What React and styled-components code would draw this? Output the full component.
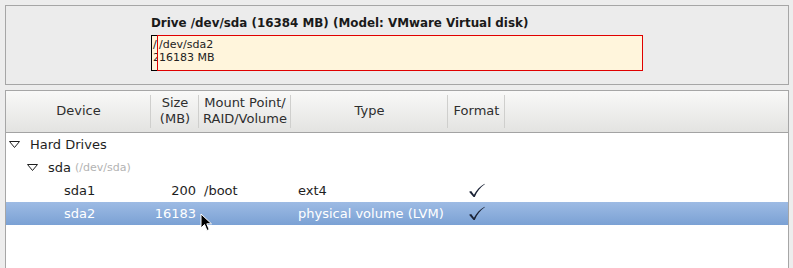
import React from "react";
import styled, { createGlobalStyle } from "styled-components";

const GlobalStyle = createGlobalStyle`
  html, body {
    margin: 0;
    padding: 0;
    background: #ededed;
    font-family: "DejaVu Sans", "Liberation Sans", sans-serif;
  }
`;

const COLUMNS = "145px 48px 92px 157px 57px 1fr";

const Page = styled.div`
  width: 793px;
  height: 268px;
  box-sizing: border-box;
  padding: 5px 5px 0 5px;
  display: flex;
  flex-direction: column;
  gap: 5px;
  overflow: hidden;
  position: relative;
`;

const DrivePanel = styled.div`
  width: 784px;
  height: 80px;
  box-sizing: border-box;
  border: 1px solid #a6a6a6;
  background: #ececec;
  padding: 10px 0 0 145px;
  display: flex;
  flex-direction: column;
  gap: 4px;
`;

const DriveTitle = styled.div`
  font-size: 11.9px;
  font-weight: bold;
  color: #1a1a1a;
  line-height: 15px;
`;

const Bar = styled.div`
  display: flex;
  height: 36px;
`;

const Segment = styled.div`
  box-sizing: border-box;
  width: ${(p) => p.$w}px;
  height: 36px;
  border: 1px solid ${(p) => p.$border};
  margin-left: ${(p) => (p.$overlap ? -1 : 0)}px;
  background: #fff5dc;
  overflow: hidden;
  white-space: nowrap;
  font-size: 11px;
  line-height: 13px;
  color: #222;
  padding: 2px 0 0 1px;
`;

const TreeView = styled.div`
  flex: 1;
  width: 784px;
  box-sizing: border-box;
  border: 1px solid #a6a6a6;
  border-bottom: none;
  background: #ffffff;
`;

const Header = styled.div`
  display: grid;
  grid-template-columns: ${COLUMNS};
  height: 42px;
  box-sizing: border-box;
  border-bottom: 1px solid #a3a3a3;
  background: linear-gradient(#f9f9f8, #e3e3e1);
`;

const HeaderCell = styled.div`
  display: flex;
  align-items: center;
  justify-content: center;
  text-align: center;
  font-size: 13px;
  line-height: 16px;
  color: #2e2e2e;
  padding-bottom: 1px;
  position: relative;
  &::after {
    content: "";
    display: ${(p) => (p.$sep ? "block" : "none")};
    position: absolute;
    right: 0;
    top: 4px;
    bottom: 4px;
    width: 1px;
    background: #cfcfcd;
  }
`;

const Row = styled.div`
  display: grid;
  grid-template-columns: ${COLUMNS};
  height: 23px;
  align-items: center;
  font-size: 13px;
  color: ${(p) => (p.$selected ? "#ffffff" : "#1e1e1e")};
  background: ${(p) =>
    p.$selected ? "linear-gradient(#9dbbe4, #7ba1d4)" : "transparent"};
`;

const DeviceCell = styled.div`
  display: flex;
  align-items: center;
  padding-left: ${(p) => p.$indent}px;
  white-space: nowrap;
`;

const Expander = styled.svg`
  width: 11px;
  height: 7px;
  margin-right: 10px;
  flex-shrink: 0;
`;

const DevPath = styled.span`
  font-size: 11px;
  color: #b3b3b3;
  margin-left: 4px;
`;

const SizeCell = styled.div`
  text-align: right;
  padding-right: 3px;
`;

const TextCell = styled.div`
  padding-left: ${(p) => p.$pad || 5}px;
  white-space: nowrap;
`;

const CheckCell = styled.div`
  display: flex;
  justify-content: center;
  padding-right: 1px;
`;

const Pointer = styled.svg`
  position: absolute;
  left: 200px;
  top: 213px;
  width: 14px;
  height: 20px;
`;

const Triangle = () => (
  <Expander viewBox="0 0 11 7">
    <path d="M0.5 0.5 L10.5 0.5 L5.5 6.5 Z" fill="#fff" stroke="#1e1e1e" strokeWidth="1" />
  </Expander>
);

const Check = () => (
  <svg width="17" height="15" viewBox="0 0 16 14">
    <path
      d="M1 8.2 L3 7.4 L5.6 11 C8 6.5 11 3 15.6 0.6 L15.8 1.2 C11.5 4 8.6 8 6.4 13.2 L5.2 13.2 Z"
      fill="#1b2336"
    />
  </svg>
);

const columns = [
  { label: "Device", sep: true },
  { label: "Size\n(MB)", sep: true },
  { label: "Mount Point/\nRAID/Volume", sep: true },
  { label: "Type", sep: true },
  { label: "Format", sep: true },
  { label: "", sep: false },
];

const partitions = [
  { name: "sda1", size: "200", mount: "/boot", type: "ext4", format: true },
  { name: "sda2", size: "16183", mount: "", type: "physical volume (LVM)", format: true, selected: true },
];

export default function App() {
  return (
    <>
      <GlobalStyle />
      <Page>
        <DrivePanel>
          <DriveTitle>Drive /dev/sda (16384 MB) (Model: VMware Virtual disk)</DriveTitle>
          <Bar>
            <Segment $w={7} $border="#000000">
              /dev/sda1
              <br />
              200 MB
            </Segment>
            <Segment $w={486} $border="#e00000" $overlap>
              /dev/sda2
              <br />
              16183 MB
            </Segment>
          </Bar>
        </DrivePanel>
        <TreeView>
          <Header>
            {columns.map((c, i) => (
              <HeaderCell key={i} $sep={c.sep}>
                <span style={{ whiteSpace: "pre" }}>{c.label}</span>
              </HeaderCell>
            ))}
          </Header>
          <Row>
            <DeviceCell $indent={3}>
              <Triangle />
              Hard Drives
            </DeviceCell>
          </Row>
          <Row>
            <DeviceCell $indent={21}>
              <Triangle />
              sda<DevPath>(/dev/sda)</DevPath>
            </DeviceCell>
          </Row>
          {partitions.map((p) => (
            <Row key={p.name} $selected={p.selected}>
              <DeviceCell $indent={58}>{p.name}</DeviceCell>
              <SizeCell>{p.size}</SizeCell>
              <TextCell>{p.mount}</TextCell>
              <TextCell $pad={7}>{p.type}</TextCell>
              <CheckCell>{p.format && <Check />}</CheckCell>
              <div />
            </Row>
          ))}
        </TreeView>
        <Pointer viewBox="0 0 14 20">
          <path
            d="M1 1 L1 15 L4.5 11.5 L7 17.5 L9.2 16.5 L6.8 10.8 L11.5 10.8 Z"
            fill="#000"
            stroke="#fff"
            strokeWidth="1"
            strokeLinejoin="round"
          />
        </Pointer>
      </Page>
    </>
  );
}
